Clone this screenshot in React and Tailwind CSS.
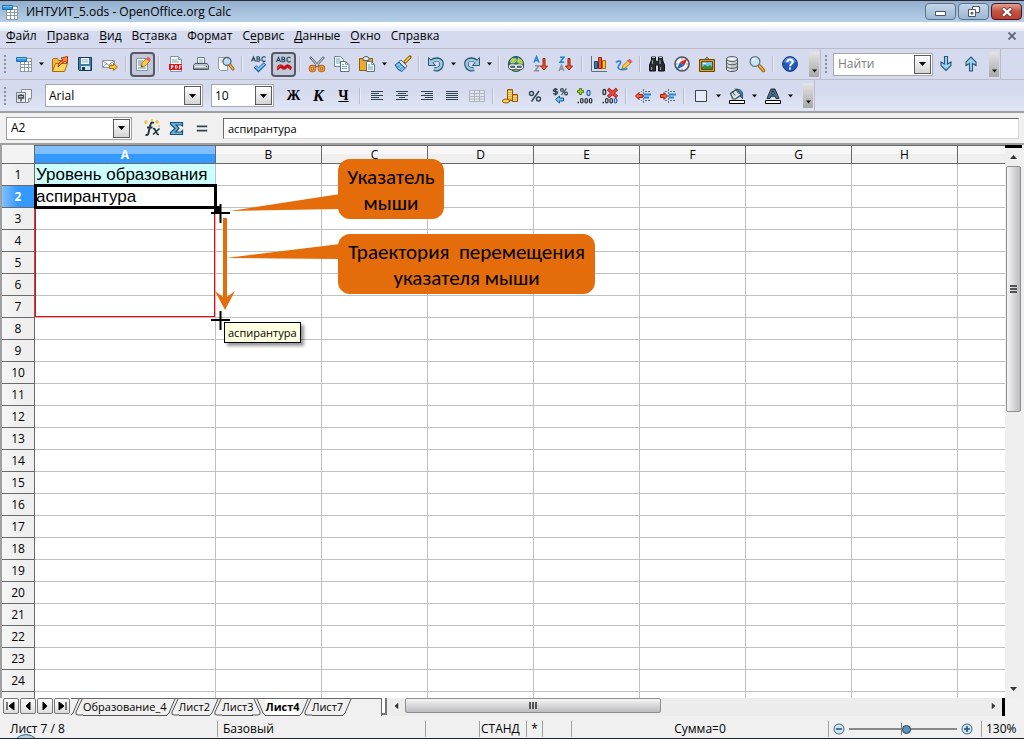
import { clsx } from "clsx";

const ICONS = {
  sheet: (
    <>
      <path d="M4 2h12v14H4z" fill="#fff" />
      <path d="M4 5.500h12M4 8.500h12M4 11.500h12M4.500 5v11M8.500 5v11M12.500 5v11M15.500 2v14M4 15.500h12M11 2.500h5" stroke="#8b98a5" fill="none" />
      <path d="M.5 1.500h10v4H.5z" fill="#2f9be6" stroke="#1c6fae" />
      <path d="M1 2.500h9" stroke="#7cc8f8" />
    </>
  ),
  open: (
    <>
      <path d="M.5 15V3.500l1-1h4l1 2h3V8" fill="#f3b93c" stroke="#a86b05" />
      <path d="M.5 15.500l3-8h12l-3 8z" fill="#ffd75e" stroke="#a86b05" />
      <path d="M6 11c0-4 2-6 5-6.500L9 2l6.500-1.500V7L13 5.500C10 7 9 8 6 11z" fill="#f58a3c" stroke="#a8280a" strokeWidth=".9" />
    </>
  ),
  save: (
    <>
      <path d="M1.500 1.500h13v13h-12l-1-1z" fill="#3d7ea8" stroke="#173a52" />
      <path d="M4 2h8v6H4z" fill="#eef6fb" />
      <path d="M5 4h6M5 6h6" stroke="#9db6c6" />
      <path d="M4 10h9v4H4z" fill="#d5dfe6" />
      <path d="M5 11h3v3H5z" fill="#173a52" />
    </>
  ),
  mail: (
    <>
      <path d="M.5 4.500h12v7H.5z" fill="#fff" stroke="#8a949e" />
      <path d="M1 5l5.500 4L12 5M1 11l4-3.500M12 11L8 7.500" fill="none" stroke="#8a949e" />
      <path d="M7.500 9.500h4v-2l4 3.500-4 3.500v-2h-4z" fill="#ffc83d" stroke="#a86b05" />
    </>
  ),
  edit: (
    <>
      <path d="M1.500 2.500h11v12h-11z" fill="#fff" stroke="#7d98ad" />
      <path d="M3 5h5M3 7h4M3 9h3M3 12h8" stroke="#5d7f99" />
      <path d="M6 11l1-4 5-5 3 3-5 5z" fill="#ffc83d" stroke="#8a6a10" strokeWidth=".7" />
      <path d="M11 3l2-2.500L16 3.500 14 6z" fill="#ef5b6a" />
      <path d="M6 11l.6-2 1.400 1.400z" fill="#222" />
    </>
  ),
  pdf: (
    <>
      <path d="M2.500.5h8l3 3v12h-11z" fill="#f2f6f9" stroke="#8395a3" />
      <path d="M10.500.5v3h3" fill="#c4d2dc" stroke="#8395a3" />
      <path d="M4 4h5M4 6h7" stroke="#8fa3b2" />
      <path d="M1 8h13v6H1z" fill="#e0161c" />
      <path d="M3.500 13V9.500h1.500v1.500H3.500M7.500 9.500v3h1l.6-.6V10l-.6-.5zM11.500 13V9.500h2M11.500 11.200h1.500" stroke="#fff" fill="none" strokeWidth=".9" />
    </>
  ),
  print: (
    <>
      <path d="M4.500 8V1.500h7V8" fill="#fff" stroke="#6c7c88" />
      <path d="M6 4h4M6 6h4" stroke="#7da4c1" />
      <path d="M2 7.500h12l1.500 2v4H.5v-4z" fill="#b9c4cc" stroke="#4c5961" />
      <path d="M1 12.500h14v1.500H1z" fill="#4c5961" />
      <path d="M2 10.500h10" stroke="#e9eef1" />
      <path d="M13 10h1v1h-1z" fill="#3b8a2c" />
    </>
  ),
  preview: (
    <>
      <path d="M.5 1.500h9v13h-7l-2-2z" fill="#fff" stroke="#8d9aa4" />
      <path d="M2 4h4M2 6h2" stroke="#b6c2cb" />
      <circle cx="9" cy="5.500" r="4" fill="#b9dcf4" stroke="#4e6576" strokeWidth="1.300" />
      <path d="M7 4.500a2.500 2.500 0 0 1 2-1.500" stroke="#fff" fill="none" />
      <path d="M12 9l3 4" stroke="#8c5a0a" strokeWidth="3" strokeLinecap="round" />
      <path d="M12 9l3 4" stroke="#f6b53a" strokeWidth="1.500" strokeLinecap="round" />
    </>
  ),
  spell: (
    <>
      <path d="M.5 5.500L2.500.8l2 4.700M1.200 4h2.600M6 .8v4.400h2l.9-.8v-.8L8 3H6h1.800l.8-.7v-.8l-.8-.7zM14.500 1.500l-1-.7h-1.200l-1.300 1v2.600l1.300 1h1.200l1-.7" fill="none" stroke="#244a60" strokeWidth="1.100" />
      <path d="M4 10.500l3.500 3.500L14 7.500" fill="none" stroke="#1d5f9c" strokeWidth="3.600" />
      <path d="M4.500 10.700l3 2.800 6-5.700" fill="none" stroke="#7cc8f8" strokeWidth="1.800" />
    </>
  ),
  autospell: (
    <>
      <path d="M.5 6l2-4.700 2 4.700M1.200 4.500h2.600M6 1.300v4.400h2l.9-.8v-.8L8 3.500H6h1.800l.8-.7V2L8 1.300zM14.500 2l-1-.7h-1.200l-1.300 1v2.600l1.300 1h1.200l1-.7" fill="none" stroke="#244a60" strokeWidth="1.100" />
      <path d="M1 12.500c1.500 0 2-2.500 3.500-2.500s2 2 3.500 2 2-2 3.500-2 2 2 4 2.500" fill="none" stroke="#c0141a" strokeWidth="3.400" />
      <path d="M1.500 12c1.500 0 1.500-2.500 3-2.500" fill="none" stroke="#f35a5a" />
    </>
  ),
  cut: (
    <>
      <path d="M1 1l9 10M15 1L6 11" stroke="#53616c" strokeWidth="2.400" />
      <path d="M1.500 1.500l8 9M14.500 1.500l-8 9" stroke="#dfe7ec" />
      <circle cx="3.500" cy="12.500" r="2.300" fill="none" stroke="#a3470a" strokeWidth="2.800" />
      <circle cx="12.500" cy="12.500" r="2.300" fill="none" stroke="#a3470a" strokeWidth="2.800" />
      <circle cx="3.500" cy="12.500" r="2.300" fill="none" stroke="#f59a2c" strokeWidth="1.600" />
      <circle cx="12.500" cy="12.500" r="2.300" fill="none" stroke="#f59a2c" strokeWidth="1.600" />
    </>
  ),
  copy: (
    <>
      <path d="M.5.5h6l3 3v7h-9z" fill="#eef5fa" stroke="#6d8a9e" />
      <path d="M2 3h4M2 5h5M2 7h5" stroke="#7fa5be" />
      <path d="M6.500 5.500h5l3.500 3v7H6.500z" fill="#fff" stroke="#54758b" />
      <path d="M11.500 5.500v3H15M8 8.500h2M8 10.500h5M8 12.500h5" fill="none" stroke="#7fa5be" />
    </>
  ),
  paste: (
    <>
      <path d="M.5 2.500h13v12H.5z" fill="#eda92b" stroke="#8d5c05" />
      <path d="M4 4.500V2l2-1.500h2L10 2v2.500z" fill="#e3e6e8" stroke="#555f66" />
      <path d="M7.500 5.500h5l3 3v7h-8z" fill="#fff" stroke="#54758b" />
      <path d="M12.500 5.500v3h3M9 9h2M9 11h5M9 13h5" fill="none" stroke="#6c97b4" />
    </>
  ),
  brush: (
    <>
      <path d="M10 6l5-5" stroke="#8d5c05" strokeWidth="3.200" strokeLinecap="round" />
      <path d="M10 6l5-5" stroke="#ffc83d" strokeWidth="1.700" />
      <path d="M6 4l6 6-2 2.500L3.500 6z" fill="#dfe6ea" stroke="#5e6c76" />
      <path d="M4 6l6 6-3 3.500-4-2L0 9z" fill="#59a8e6" stroke="#1d5f9c" />
      <path d="M5 8l-3 1.500M6.500 10L4 13M8.500 12L6.500 14.500" stroke="#c0e2fa" />
    </>
  ),
  undo: (
    <>
      <path d="M3 5.500C10 1 14.500 4.500 13.500 9c-.7 3.500-4 5-7.500 4" fill="none" stroke="#2b5873" strokeWidth="4.400" />
      <path d="M.5 1.500v8h7z" fill="#9fcbe3" stroke="#2b5873" />
      <path d="M3 6C10 1.500 14.300 5 13.300 9c-.7 3-4 4.600-7 4" fill="none" stroke="#9fcbe3" strokeWidth="2.400" />
    </>
  ),
  redo: (
    <>
      <path d="M13 5.500C6 1 1.500 4.500 2.500 9c.7 3.500 4 5 7.500 4" fill="none" stroke="#2b5873" strokeWidth="4.400" />
      <path d="M15.500 1.500v8h-7z" fill="#9fcbe3" stroke="#2b5873" />
      <path d="M13 6C6 1.500 1.700 5 2.700 9c.7 3 4 4.600 7 4" fill="none" stroke="#9fcbe3" strokeWidth="2.400" />
    </>
  ),
  link: (
    <>
      <circle cx="8" cy="8" r="7.500" fill="#2b7aa8" stroke="#1b4557" />
      <path d="M2 5l2-3 4 .5 1 2-3 3H3zM10 1.500l4 2.500 1 4-3 1-3-3z" fill="#b6d24a" />
      <path d="M3 13l5 2.500 5-2.500z" fill="#8fb83a" />
      <rect x="1.500" y="9" width="6.500" height="3.500" rx="1.700" fill="none" stroke="#30383d" strokeWidth="2.600" />
      <rect x="8" y="9" width="6.500" height="3.500" rx="1.700" fill="none" stroke="#30383d" strokeWidth="2.600" />
      <rect x="1.500" y="9" width="6.500" height="3.500" rx="1.700" fill="none" stroke="#eef2f4" strokeWidth="1.300" />
      <rect x="8" y="9" width="6.500" height="3.500" rx="1.700" fill="none" stroke="#eef2f4" strokeWidth="1.300" />
    </>
  ),
  sortAz: (
    <>
      <path d="M1 6.500L3.500.8 6 6.500M1.800 4.500h3.400" fill="none" stroke="#1f86d8" strokeWidth="1.600" />
      <path d="M2 9.700h4L2 14.800h4.200" fill="none" stroke="#8a8f94" strokeWidth="1.500" />
      <path d="M10 2.500h2v7.500h2.500l-3.500 4L7.500 10H10z" fill="#f0603a" stroke="#9d1c05" />
    </>
  ),
  sortZa: (
    <>
      <path d="M2 1.200h4L2 6.300h4.200" fill="none" stroke="#1f86d8" strokeWidth="1.500" />
      <path d="M1 15l2.500-5.700L6 15M1.800 13h3.400" fill="none" stroke="#8a8f94" strokeWidth="1.500" />
      <path d="M10 2.500h2v7.500h2.500l-3.500 4L7.500 10H10z" fill="#f0603a" stroke="#9d1c05" />
    </>
  ),
  chart: (
    <>
      <path d="M.5 0v15.500H16" fill="none" stroke="#5b6f7d" />
      <path d="M3.500 5.500h3v7h-3z" fill="#2f7fb4" stroke="#174763" />
      <path d="M7.500 1.500h3v11h-3z" fill="#f1592e" stroke="#9d1c05" />
      <path d="M11.500 4.500h3v8h-3z" fill="#ffc02e" stroke="#a86b05" />
    </>
  ),
  draw: (
    <>
      <path d="M0 6.500c4-3 6-1 3.500 2-2 2.500-2 4.500 1 5 3 .4 5 0 7-1" fill="none" stroke="#2f86d0" strokeWidth="1.700" />
      <path d="M6 13l1-3.500 5-5 2.500 2.500-5 5z" fill="#ffc83d" stroke="#8a6a10" strokeWidth=".8" />
      <path d="M12 4.500l1.500-1.500L16 5.500 14.500 7z" fill="#ef5b6a" stroke="#a83240" strokeWidth=".5" />
    </>
  ),
  find: (
    <>
      <path d="M2.500 1h4v3l1 2h1l1-2V1h4v3l2 5v6H9.500V9h-3v6H.5V9l2-5z" fill="#2a2e31" stroke="#111" />
      <path d="M3.500 4v4M11 4v4M2.500 11v3M11.500 11v3" stroke="#8b959b" strokeWidth="1.200" />
      <path d="M3 1.500h3M10 1.500h3" stroke="#b7c0c5" />
    </>
  ),
  compass: (
    <>
      <circle cx="8" cy="8" r="7" fill="#f4f6f7" stroke="#4b565d" strokeWidth="1.600" />
      <path d="M8 2v1.500M8 12.500V14M2 8h1.500M12.500 8H14" stroke="#68747b" />
      <path d="M13.500 2.500L10 10 6 6z" fill="#e32321" />
      <path d="M2.500 13.500L6 6l4 4z" fill="#1c62c8" />
    </>
  ),
  gallery: (
    <>
      <path d="M6 3.500L8 1l2 2.500" fill="none" stroke="#5b4a20" />
      <path d="M.5 3.500h15v12H.5z" fill="#d9a13a" stroke="#6e4607" />
      <path d="M2.500 5.500h11v8h-11z" fill="#78c0f0" stroke="#6e4607" />
      <path d="M3 13v-2l3-2 3 1.500L11 9l2 2v2z" fill="#2f8a3a" />
      <path d="M4 7.500h3" stroke="#fff" />
    </>
  ),
  database: (
    <>
      <path d="M2.500 3v10c0 1.500 2.500 2.500 5.500 2.500s5.500-1 5.500-2.500V3z" fill="#c5cacd" stroke="#51595e" />
      <path d="M4 5v9M6 6v9" stroke="#f3f5f6" />
      <path d="M2.500 6.500c0 1.300 2.500 2.300 5.500 2.300s5.500-1 5.500-2.300M2.500 10c0 1.300 2.500 2.300 5.500 2.300s5.500-1 5.500-2.300" fill="none" stroke="#51595e" />
      <ellipse cx="8" cy="3" rx="5.500" ry="2.400" fill="#eceff0" stroke="#51595e" />
    </>
  ),
  zoom: (
    <>
      <path d="M10.500 10l4 4.500" stroke="#8c5a0a" strokeWidth="3.400" strokeLinecap="round" />
      <path d="M10.500 10l4 4.500" stroke="#f6b53a" strokeWidth="1.800" strokeLinecap="round" />
      <circle cx="6" cy="5.500" r="4.900" fill="#c7e5f8" stroke="#60788a" strokeWidth="1.300" />
      <path d="M3.500 5A2.800 2.800 0 0 1 6 2.700" fill="none" stroke="#fff" strokeWidth="1.300" />
    </>
  ),
  help: (
    <>
      <circle cx="8" cy="8" r="7.400" fill="#2457b8" stroke="#123a86" />
      <path d="M2 6a6.300 6.300 0 0 1 12 0c-4 2-8 2-12 0z" fill="#5c8be0" />
      <path d="M5.300 6c0-3.400 5.400-3.300 5.400 0 0 1.900-2.600 2-2.600 4.200M8 11.600v1.900" fill="none" stroke="#fff" strokeWidth="2" />
    </>
  ),
  down: <path d="M6.500.5h3v7.500l3.500-2v3.500l-5 5-5-5V6l3.500 2z" fill="#9fd0ee" stroke="#245a7c" strokeWidth="1.100" />,
  up: <path d="M6.500 15h3V7.500l3.500 2V6L8 1 3 6v3.500l3.500-2z" fill="#9fd0ee" stroke="#245a7c" strokeWidth="1.100" />,
  styles: (
    <>
      <path d="M5.500 1.500h10v9l-3 4h-7z" fill="#eff1f3" stroke="#858e96" />
      <path d="M12.500 14v-3.500h3" fill="#d3d7da" stroke="#858e96" />
      <path d="M.5 4.500h9v10h-9z" fill="#e4e7ea" stroke="#777f86" />
      <path d="M2.500 10V7.500h5V10zM5 6v1.500M5 10v3.500" fill="none" stroke="#3d4a54" strokeWidth="1.300" />
    </>
  ),
  alignLeft: <path d="M2 3.500h12M2 5.500h8M2 7.500h12M2 9.500h8M2 11.500h12" stroke="#2f4350" />,
  alignCenter: <path d="M2 3.500h12M4 5.500h8M2 7.500h12M5 9.500h6M2 11.500h12" stroke="#2f4350" />,
  alignRight: <path d="M2 3.500h12M6 5.500h8M2 7.500h12M6 9.500h8M2 11.500h12" stroke="#2f4350" />,
  justify: <path d="M2 3.500h12M2 5.500h12M2 7.500h12M2 9.500h12M2 11.500h12" stroke="#2f4350" />,
  merge: <path d="M.5 2.500h15v11H.5zM0 5.500h16M0 8.500h16M0 11h16M5.500 2v12M10.500 2v12" fill="#e3e6f0" stroke="#b0b4c0" />,
  currency: (
    <>
      <path d="M5.500 1.500h5v11h-5z" fill="#f0a830" stroke="#8f5406" />
      <path d="M6 3.500h4M6 5.500h4M6 7.500h4M6 9.500h4" stroke="#ffe08a" />
      <path d="M10.500 6.500h5v7h-5z" fill="#f0a830" stroke="#8f5406" />
      <path d="M11 8.500h4M11 10.500h4M11 12.500h4" stroke="#ffe08a" />
      <ellipse cx="4" cy="13" rx="3.500" ry="2" fill="#ffd05a" stroke="#8f5406" />
    </>
  ),
  percent: (
    <>
      <circle cx="4.500" cy="5.500" r="2" fill="none" stroke="#33474f" strokeWidth="1.400" />
      <circle cx="11.500" cy="11" r="2" fill="none" stroke="#33474f" strokeWidth="1.400" />
      <path d="M12 3L4.500 13.500" stroke="#33474f" strokeWidth="1.500" />
    </>
  ),
  standard: (
    <>
      <path d="M5.500 2l-1-.8H2.500l-1 1V3l4 1v1.200l-1 1H2.500L1.200 5.400M3.500 0v7.500" fill="none" stroke="#33474f" strokeWidth="1.300" />
      <circle cx="10" cy="2" r="1.400" fill="none" stroke="#33474f" strokeWidth="1.200" />
      <circle cx="14" cy="5.500" r="1.400" fill="none" stroke="#33474f" strokeWidth="1.200" />
      <path d="M14.500.5l-5 6.500" stroke="#33474f" strokeWidth="1.200" />
      <path d="M3.500 11.500l4-3.500v2h4v3h-4v2z" fill="#79bff0" stroke="#155c92" />
    </>
  ),
  addDecimal: (
    <>
      <path d="M2.500.5h2v2h2v2h-2v2h-2v-2h-2v-2h2z" fill="#a6d82e" stroke="#4b7a0a" />
      <rect x="10" y="2.500" width="3" height="5" rx="1.400" fill="none" stroke="#2b62c8" strokeWidth="1.300" />
      <path d="M.5 14.500H2" stroke="#222" strokeWidth="1.600" />
      <g fill="none" stroke="#273238" strokeWidth="1.200">
        <rect x="3.600" y="10.500" width="2.400" height="4.400" rx="1.200" />
        <rect x="8" y="10.500" width="2.400" height="4.400" rx="1.200" />
        <rect x="12.400" y="10.500" width="2.400" height="4.400" rx="1.200" />
      </g>
    </>
  ),
  dropDecimal: (
    <>
      <rect x="1" y="1.500" width="2.600" height="5" rx="1.300" fill="none" stroke="#273238" strokeWidth="1.300" />
      <path d="M.5 14.500H2" stroke="#222" strokeWidth="1.600" />
      <rect x="3.600" y="10.500" width="2.400" height="4.400" rx="1.200" fill="none" stroke="#273238" strokeWidth="1.200" />
      <rect x="8" y="10.500" width="2.400" height="4.400" rx="1.200" fill="none" stroke="#273238" strokeWidth="1.200" />
      <rect x="12.400" y="10.500" width="2.400" height="4.400" rx="1.200" fill="none" stroke="#2b62c8" strokeWidth="1.200" />
      <path d="M6 1l9 8M15 1L6 9" stroke="#8f0d0d" strokeWidth="3.200" />
      <path d="M6.500 1.500l8 7M14.500 1.500l-8 7" stroke="#f04a3c" strokeWidth="1.800" />
    </>
  ),
  outdent: (
    <>
      <path d="M6 3.500h1M8.500 1v14M10 3.500h6M10 12.500h6M6 12.500h1" stroke="#5a6b76" strokeDasharray="2 1" />
      <path d="M9 6.500h7M9 9.500h5" stroke="#1f86d8" strokeWidth="2" />
      <path d="M.5 8L4 4.500v2h3.500v3H4v2z" fill="#f0603a" stroke="#9d1c05" />
    </>
  ),
  indent: (
    <>
      <path d="M5 3.500h2M8.500 1v14M10 3.500h6M10 12.500h6M5 12.500h2" stroke="#5a6b76" strokeDasharray="2 1" />
      <path d="M9 6.500h7M9 9.500h5" stroke="#1f86d8" strokeWidth="2" />
      <path d="M7.500 8L4 4.500v2H.5v3H4v2z" fill="#f0603a" stroke="#9d1c05" />
    </>
  ),
  borders: <path d="M2.500 2.500h11v11h-11z" fill="#e8ecf8" stroke="#39454d" />,
  fill: (
    <>
      <path d="M9 1.500c4 0 5 3 4.500 9l-3-3z" fill="#3a8ec8" stroke="#1c557e" />
      <path d="M1.500 5.500L8 1l4 6-5.500 4H4z" fill="#d9e2e8" stroke="#34464f" strokeWidth="1.200" />
      <path d="M3 3l3 4.500M6 .5l3.500 5" stroke="#34464f" />
      <path d="M.5 12.500h15v3H.5z" fill="#fff" stroke="#000" />
    </>
  ),
  fontColor: (
    <>
      <path d="M2 10.500L6 1h4l4 9.500h-3l-.8-2.300H5.800L5 10.500zM6.500 6h3L8 2.500z" fill="#4f7890" stroke="#18303f" />
      <path d="M.5 12.500h15v3H.5z" fill="#fff" stroke="#000" />
    </>
  ),
  fx: (
    <>
      <path d="M10 3C7 1.500 6.500 4 6 6.500L4.500 13c-.5 2-1.500 2.500-3 1.500M3 7.500h5.500" fill="none" stroke="#22363f" strokeWidth="1.900" />
      <path d="M9 8.500l1.500.3 3 5.500 1.500.2M15.500 8.500L9 14.500" fill="none" stroke="#22363f" strokeWidth="1.700" />
      <path d="M2 0v4M0 2h4M8-1v3M13 0v4M11 2h4M15 5v2" stroke="#f0bb18" strokeWidth="1.200" />
    </>
  ),
  sum: <path d="M1.500 2.500h12v3.500l-1.500-1H7l3 3.200L6.500 12H12l1.500-1.500v4h-12v-2L6 8.500 1.500 4z" fill="#6db4e4" stroke="#164f78" strokeWidth="1.200" />,
  equals: <path d="M2 6h12M2 11h12" stroke="#33474f" strokeWidth="2" />,
};

function Icon({ name }) {
  return (
    <svg viewBox="0 0 16 16" className="size-4 overflow-visible" aria-hidden="true">
      {ICONS[name]}
    </svg>
  );
}

const STANDARD_TOOLS = [
  ["sheet", "Создать"], "arrow", ["open", "Открыть"], ["save", "Сохранить"], ["mail", "Отправить"], "sep",
  ["edit", "Правка файла", true], "sep",
  ["pdf", "Экспорт в PDF"], ["print", "Печать"], ["preview", "Просмотр"], "sep",
  ["spell", "Орфография"], ["autospell", "Автопроверка", true], "sep",
  ["cut", "Вырезать"], ["copy", "Копировать"], ["paste", "Вставить"], "arrow", ["brush", "Формат по образцу"], "sep",
  ["undo", "Отменить"], "arrow", ["redo", "Повторить"], "arrow", "sep",
  ["link", "Гиперссылка"], ["sortAz", "По возрастанию"], ["sortZa", "По убыванию"], "sep",
  ["chart", "Диаграмма"], ["draw", "Рисование"], "sep",
  ["find", "Найти и заменить"], ["compass", "Навигатор"], ["gallery", "Галерея"], ["database", "Источники данных"], ["zoom", "Масштаб"], "sep",
  ["help", "Справка"],
];

const FORMAT_TOOLS = [
  "sep", ["alignLeft", "По левому краю"], ["alignCenter", "По центру"], ["alignRight", "По правому краю"], ["justify", "По ширине"], ["merge", "Объединить ячейки"], "sep",
  ["currency", "Денежный"], ["percent", "Процентный"], ["standard", "Стандартный"], ["addDecimal", "Добавить разряд"], ["dropDecimal", "Удалить разряд"], "sep",
  ["outdent", "Уменьшить отступ"], ["indent", "Увеличить отступ"], "sep",
  ["borders", "Обрамление"], "arrow", ["fill", "Цвет фона"], "arrow", ["fontColor", "Цвет шрифта"], "arrow",
];

const MENU = [
  ["", "Ф", "айл"],
  ["", "П", "равка"],
  ["", "В", "ид"],
  ["Вс", "т", "авка"],
  ["Фо", "р", "мат"],
  ["С", "е", "рвис"],
  ["", "Д", "анные"],
  ["", "О", "кно"],
  ["Спр", "а", "вка"],
];

const COLUMNS = ["A", "B", "C", "D", "E", "F", "G", "H", ""];
const ROWS = Array.from({ length: 25 }, (_, i) => i + 1);
const LAST_FULL_ROW = 24;
const CELLS = { A1: "Уровень образования", A2: "аспирантура" };

function Triangle({ className }) {
  return (
    <svg viewBox="0 0 7 4" className={clsx("h-1", className || "w-[7px]")} aria-hidden="true">
      <path d="M0 0h7L3.500 4z" fill="currentColor" />
    </svg>
  );
}

function ToolButton({ label, pressed, children }) {
  return (
    <button
      type="button"
      aria-label={label}
      className={clsx(
        "flex h-[25px] w-[25px] shrink-0 items-center justify-center",
        pressed && "rounded-sm border-2 border-[#555a66] bg-[#c3c8d8]"
      )}
    >
      {children}
    </button>
  );
}

function Tools({ items }) {
  return items.map((item, i) => {
    if (item === "sep") {
      return <span key={i} className="mx-[3px] h-4 w-0.5 shrink-0 border-l border-[#b9bccb] bg-[#e9ebf5]" />;
    }
    if (item === "arrow") {
      return (
        <button key={i} type="button" aria-label="Ещё" className="flex w-[11px] shrink-0 justify-center">
          <Triangle className="w-[5px]" />
        </button>
      );
    }
    return (
      <ToolButton key={i} label={item[1]} pressed={item[2]}>
        <Icon name={item[0]} />
      </ToolButton>
    );
  });
}

function Grip() {
  return <span className="mx-1 h-[18px] w-[3px] shrink-0 border-l-2 border-dotted border-[#8a90a4]" />;
}

function Overflow() {
  return (
    <button type="button" aria-label="Другие кнопки" className="flex h-[25px] w-2.5 shrink-0 items-end justify-center bg-linear-to-b from-[#e4e4e4] to-[#a8a8a8] pb-1">
      <Triangle className="w-[5px]" />
    </button>
  );
}

function ArrowBox() {
  return (
    <span className="flex h-full w-[17px] shrink-0 items-center justify-center border border-[#5c5c5c] bg-linear-to-b from-white to-[#d4d4d4]">
      <Triangle />
    </span>
  );
}

function Combo({ label, value, className }) {
  return (
    <div className={clsx("relative h-[23px] shrink-0 border border-[#a6a8b0] bg-white", className)}>
      <select aria-label={label} defaultValue={value} className="h-full w-full appearance-none bg-transparent pl-[3px] text-[12px] outline-none">
        <option>{value}</option>
      </select>
      <span className="pointer-events-none absolute inset-y-px right-px">
        <ArrowBox />
      </span>
    </div>
  );
}

function TitleBar() {
  const frame = "flex h-[17px] w-[31px] items-center justify-center rounded-sm border border-[#5d7189]";
  return (
    <header className="flex h-[22px] shrink-0 items-center border-t border-[#2c2c34] bg-linear-to-b from-[#93afcd] to-[#b6cfe8] px-0.5">
      <Icon name="sheet" />
      <h1 className="ml-2 flex-1 text-[12px]">ИНТУИТ_5.ods - OpenOffice.org Calc</h1>
      <div className="flex gap-0.5">
        <button type="button" aria-label="Свернуть" className={clsx(frame, "bg-linear-to-b from-[#c5d6e9] to-[#9cb7d3]")}>
          <svg viewBox="0 0 11 5" className="mt-1 h-[5px] w-[11px]"><path d="M.5.5h10v4H.5z" fill="#fff" stroke="#4b5866" /></svg>
        </button>
        <button type="button" aria-label="Восстановить" className={clsx(frame, "bg-linear-to-b from-[#c5d6e9] to-[#9cb7d3]")}>
          <svg viewBox="0 0 12 11" className="h-[11px] w-3">
            <path d="M4.500.5h7v6h-7z" fill="#fff" stroke="#4b5866" />
            <path d="M.5 3.500h7v7h-7z" fill="#fff" stroke="#4b5866" />
            <path d="M3 6.500h2v1.500H3z" fill="#9cb7d3" stroke="#4b5866" />
          </svg>
        </button>
        <button type="button" aria-label="Закрыть" className="flex h-[17px] w-[31px] items-center justify-center rounded-sm border border-[#4a1420] bg-linear-to-b from-[#e0a093] via-[#c4513f] to-[#b8402c]">
          <svg viewBox="0 0 12 10" className="h-2.5 w-3">
            <path d="M1.500 1l9 8M10.500 1l-9 8" stroke="#6b3030" strokeWidth="4" />
            <path d="M2 1.400l8 7.200M10 1.400L2 8.600" stroke="#fff" strokeWidth="2.400" />
          </svg>
        </button>
      </div>
    </header>
  );
}

function MenuBar() {
  return (
    <nav className="flex h-[27px] shrink-0 items-center border-b border-[#bcbcc4] bg-linear-to-b from-white from-10% via-[#e6ebf7] via-33% to-[#d5daee] to-34% pl-1.5 pr-2 pt-0.5">
      <div className="flex flex-1 gap-2.5">
        {MENU.map(([before, key, after]) => (
          <button key={before + key + after} type="button">
            {before}
            <u className="underline-offset-2">{key}</u>
            {after}
          </button>
        ))}
      </div>
      <button type="button" aria-label="Закрыть документ">
        <svg viewBox="0 0 8 8" className="size-2"><path d="M.5.5l7 7M7.500.5l-7 7" stroke="#5b6573" strokeWidth="1.800" /></svg>
      </button>
    </nav>
  );
}

function StandardToolbar() {
  return (
    <div className="flex h-[31px] shrink-0 border-b border-[#bcbcc4]">
      <div className="flex items-center border-r border-[#bcbcc4] pr-px">
        <Grip />
        <Tools items={STANDARD_TOOLS} />
        <span className="w-[7px]" />
        <Overflow />
      </div>
      <div className="flex items-center border-r border-[#bcbcc4] pr-px">
        <Grip />
        <div className="ml-px flex h-[23px] w-[100px] border border-[#a6a8b0] bg-white p-px">
          <input aria-label="Найти" placeholder="Найти" className="w-0 flex-1 pl-[3px] outline-none placeholder:text-[#7d7d7d]" />
          <button type="button" aria-label="Список поиска"><ArrowBox /></button>
        </div>
        <ToolButton label="Найти далее"><Icon name="down" /></ToolButton>
        <ToolButton label="Найти ранее"><Icon name="up" /></ToolButton>
        <span className="w-1.5" />
        <Overflow />
      </div>
    </div>
  );
}

function FormatToolbar() {
  return (
    <div className="flex h-[31px] shrink-0">
      <div className="flex items-center border-r border-[#bcbcc4] pr-px">
        <Grip />
        <ToolButton label="Стили"><Icon name="styles" /></ToolButton>
        <Combo label="Шрифт" value="Arial" className="ml-[9px] w-[158px]" />
        <Combo label="Размер" value="10" className="ml-2 mr-[7px] w-[63px]" />
        <ToolButton label="Полужирный"><span className="font-['Liberation_Serif',serif] text-[14px] font-bold">Ж</span></ToolButton>
        <ToolButton label="Курсив"><span className="font-['Liberation_Serif',serif] text-[16px] font-bold italic">К</span></ToolButton>
        <ToolButton label="Подчёркнутый"><span className="font-['Liberation_Serif',serif] text-[14px] font-bold underline">Ч</span></ToolButton>
        <Tools items={FORMAT_TOOLS} />
        <span className="w-[7px]" />
        <Overflow />
      </div>
    </div>
  );
}

function FormulaBar() {
  return (
    <div className="flex h-[34px] shrink-0 items-center border-y-2 border-[#a0a0a0] bg-[#f0f0f0] pl-1.5 pr-[5px]">
      <div className="flex h-[23px] w-[126px] border border-[#a0a0a0] bg-white p-px">
        <input aria-label="Имя ячейки" defaultValue="A2" className="w-0 flex-1 pl-[3px] outline-none" />
        <button type="button" aria-label="Список имён"><ArrowBox /></button>
      </div>
      <span className="w-[7px]" />
      <ToolButton label="Мастер функций"><Icon name="fx" /></ToolButton>
      <ToolButton label="Сумма"><Icon name="sum" /></ToolButton>
      <ToolButton label="Функция"><svg viewBox="0 0 16 16" className="size-3.5">{ICONS.equals}</svg></ToolButton>
      <input
        aria-label="Строка ввода"
        defaultValue="аспирантура"
        className="ml-[9px] h-[21px] flex-1 border border-[#d8d8d8] border-l-[#696969] border-t-[#696969] bg-white pl-1 text-[11px] outline-none"
      />
    </div>
  );
}

function Grid() {
  return (
    <table className="w-full table-fixed border-separate border-spacing-0">
      <colgroup>
        <col className="w-[33px]" />
        <col className="w-[181px]" />
        {COLUMNS.slice(1, 8).map((c) => (
          <col key={c} className="w-[106px]" />
        ))}
        <col />
      </colgroup>
      <thead>
        <tr className="h-[19px] leading-4">
          <td className="border-b border-r border-[#696969] bg-[#f3f3f3] p-0" />
          {COLUMNS.map((c, i) => (
            <th
              key={i}
              scope="col"
              className={clsx(
                "border-b border-t border-[#696969] p-0",
                i < 8 && "border-r",
                c === "A"
                  ? "bg-linear-to-b from-[#7fbfff] from-50% to-[#3399ff] to-50% font-bold text-white"
                  : "bg-linear-to-b from-[#f7f7f7] from-50% to-[#efefef] to-50% font-normal"
              )}
            >
              {c}
            </th>
          ))}
        </tr>
      </thead>
      <tbody>
        {ROWS.map((r) => (
          <tr key={r} className="h-[22px] leading-5">
            <th
              scope="row"
              className={clsx(
                "border-b border-r border-[#696969] p-0",
                r === 2
                  ? "bg-linear-to-r from-[#7fbfff] to-[#3399ff] to-50% font-bold text-white"
                  : "bg-linear-to-r from-[#f7f7f7] to-[#efefef] to-50% font-normal"
              )}
            >
              {r <= LAST_FULL_ROW && r}
            </th>
            {COLUMNS.map((c, i) => (
              <td
                key={i}
                className={clsx(
                  "whitespace-nowrap border-b border-[#c0c0c0] py-0 pl-px pr-0 font-['Liberation_Sans',Arial,sans-serif] text-[17px]",
                  i < 8 && "border-r",
                  c + r === "A1" && "bg-[#ccffff]"
                )}
              >
                {CELLS[c + r]}
              </td>
            ))}
          </tr>
        ))}
      </tbody>
    </table>
  );
}

function Callout({ className, children }) {
  return (
    <p className={clsx("absolute flex h-[60px] items-center justify-center whitespace-pre rounded-xl bg-[#e46c0a] pt-0.5 text-center font-[Carlito,'Noto_Sans',sans-serif] text-[21px] leading-[26px]", className)}>
      {children}
    </p>
  );
}

/* Drag hint over the sheet: selection frame, fill range, pointer and its path. */
function Annotations() {
  return (
    <>
      <div className="absolute left-[33px] top-[61px] h-[111px] w-[180px] border border-t-0 border-[#ff0000]" />
      <div className="absolute left-8 top-[39px] h-[25px] w-[183px] border-[3px] border-black" />
      <svg viewBox="0 0 420 210" className="absolute left-0 top-0 h-[210px] w-[420px]" aria-hidden="true">
        <path d="M212 61h6v6h-6z" />
        <path d="M209 68h19M218.500 59v19M209 175h19M218.500 166v19" stroke="#000" strokeWidth="2" />
        <path d="M228 66L338 49v15zM224 113l114-14v15z" fill="#e46c0a" />
        <path d="M221 73h4v79l8-6-10 19-10-19 8 6z" fill="#e46c0a" />
      </svg>
      <Callout className="left-[336px] top-3.5 w-[106px]">{"Указатель\nмыши"}</Callout>
      <Callout className="left-[336px] top-[89px] w-[257px]">{"Траектория  перемещения\nуказателя мыши"}</Callout>
      <div className="absolute left-[222px] top-[177px] border border-black bg-[#ffffe1] px-[3px] text-[11px] leading-[19px] shadow-[3px_3px_3px_#00000066]">
        аспирантура
      </div>
    </>
  );
}

function VerticalScroll() {
  return (
    <div className="mr-0.5 flex w-[17px] shrink-0 flex-col items-center border-t-[3px] border-black bg-[#efefef]">
      <button type="button" aria-label="Вверх" className="flex h-[18px] items-center text-[#333]"><Triangle className="w-[7px] rotate-180" /></button>
      <div className="flex h-[246px] w-[15px] flex-col items-center justify-center gap-px rounded-xs border border-[#8e8e8e] bg-linear-to-r from-[#f5f5f5] to-[#bcbcc0]">
        <span className="h-0.5 w-[7px] bg-[#555]" />
        <span className="h-0.5 w-[7px] bg-[#555]" />
        <span className="h-0.5 w-[7px] bg-[#555]" />
      </div>
      <button type="button" aria-label="Вниз" className="mt-auto flex h-[18px] items-center text-[#333]"><Triangle /></button>
    </div>
  );
}

const NAV = [
  ["Первый лист", "M3 3v8M10 3L5 7l5 4z"],
  ["Предыдущий лист", "M9 3L5 7l4 4z"],
  ["Следующий лист", "M5 3l4 4-4 4z"],
  ["Последний лист", "M4 3l5 4-5 4zM11 3v8"],
];

function Slant({ flip, active, last }) {
  return (
    <svg viewBox="0 0 14 17" className={clsx("-mx-px h-[17px] w-3.5 shrink-0", flip && "-scale-x-100")} aria-hidden="true">
      {active && <path d="M12 0L6 13l1 3h7V0z" fill="#fff" />}
      <path d="M1 16L3 14 9 0" fill="none" stroke="#555" />
      {!last && <path d="M12 0L6 13q-1 3 2 3h6" fill="none" stroke="#555" />}
    </svg>
  );
}

function Tab({ active, children }) {
  return (
    <button type="button" role="tab" aria-selected={!!active} className={clsx("h-[17px] shrink-0 border-b border-[#555] text-[11px] leading-4", active ? "bg-white font-bold" : "bg-[#f0f0f0]")}>
      {children}
    </button>
  );
}

function SheetBar() {
  return (
    <div className="flex h-[18px] shrink-0 bg-[#f0f0f0] pl-[3px]">
      <div className="flex w-[379px] shrink-0 border-r border-[#696969]">
        <div className="mr-px flex gap-px">
          {NAV.map(([label, d]) => (
            <button key={label} type="button" aria-label={label} className="flex h-4 w-4 items-center justify-center rounded-xs border border-[#777] bg-linear-to-b from-white to-[#dcdcdc]">
              <svg viewBox="0 0 14 14" className="size-3.5 shrink-0"><path d={d} stroke="#000" /></svg>
            </button>
          ))}
        </div>
        <div role="tablist" className="flex flex-1 border-t border-[#696969]">
          <Slant />
          <Tab>Образование_4</Tab>
          <Slant />
          <Tab>Лист2</Tab>
          <Slant />
          <Tab>Лист3</Tab>
          <Slant flip />
          <Tab active>Лист4</Tab>
          <Slant />
          <Tab>Лист7</Tab>
          <Slant last />
        </div>
      </div>
      <span className="h-[17px] w-[5px] border-b-2 border-r-2 border-[#777] bg-white" />
      <div className="flex flex-1 items-start border-r-[3px] border-black bg-[#ececec]">
        <button type="button" aria-label="Влево" className="flex h-4 w-[18px] items-center justify-center text-[#333]"><Triangle className="w-[7px] rotate-90" /></button>
        <div className="flex h-[15px] w-64 items-center justify-center gap-px rounded-xs border border-[#8e8e8e] bg-linear-to-b from-[#f5f5f5] to-[#bcbcc0]">
          <span className="h-[7px] w-0.5 bg-[#555]" />
          <span className="h-[7px] w-0.5 bg-[#555]" />
          <span className="h-[7px] w-0.5 bg-[#555]" />
        </div>
        <button type="button" aria-label="Вправо" className="ml-auto flex h-4 w-[18px] items-center justify-center text-[#333]"><Triangle className="w-[7px] -rotate-90" /></button>
      </div>
      <span className="w-[19px]" />
    </div>
  );
}

function ZoomSign({ plus }) {
  return (
    <svg viewBox="0 0 12 12" className="size-3">
      <circle cx="6" cy="6" r="5" fill="#cfe6f7" stroke="#41698a" />
      <path d={plus ? "M3 6h6M6 3v6" : "M3 6h6"} stroke="#1d4f7a" strokeWidth="1.500" />
    </svg>
  );
}

function StatusBar() {
  const cell = "flex h-4 shrink-0 items-center border-r border-[#a0a0a0]";
  return (
    <footer className="relative flex h-[23px] shrink-0 items-center overflow-hidden border-b border-[#182430] bg-[#f0f0f0] pt-1 leading-4">
      <span className={clsx(cell, "w-[218px] pl-2.5")}>Лист 7 / 8</span>
      <span className={clsx(cell, "w-52 pl-[5px]")}>Базовый</span>
      <span className={clsx(cell, "w-[54px]")} />
      <span className={clsx(cell, "w-[47px] pl-px")}>СТАНД</span>
      <span className={clsx(cell, "w-4 justify-center")}>*</span>
      <span className={clsx(cell, "w-[29px]")} />
      <span className="flex h-4 flex-1 items-center justify-center border-r border-[#a0a0a0]">Сумма=0</span>
      <div className={clsx(cell, "w-[153px] gap-1 pl-1")}>
        <button type="button" aria-label="Уменьшить масштаб"><ZoomSign /></button>
        <div className="relative flex h-4 w-[108px] items-center">
          <span className="absolute left-[52px] top-0.5 h-3 w-px bg-[#777]" />
          <input
            type="range"
            aria-label="Масштаб"
            min="0"
            max="100"
            defaultValue="54"
            className="relative h-0.5 w-full appearance-none bg-[#8a8a8a] [&::-webkit-slider-thumb]:size-[9px] [&::-webkit-slider-thumb]:appearance-none [&::-webkit-slider-thumb]:rounded-full [&::-webkit-slider-thumb]:border [&::-webkit-slider-thumb]:border-[#24455c] [&::-webkit-slider-thumb]:bg-[#5f93b5]"
          />
        </div>
        <button type="button" aria-label="Увеличить масштаб"><ZoomSign plus /></button>
      </div>
      <span className="w-[42px] shrink-0 pl-1">130%</span>
      <span className="absolute left-3 top-[18px] size-7 rounded-full border border-[#38607e] bg-[#b9d3e6]" />
    </footer>
  );
}

export default function App() {
  return (
    <div className="flex h-screen flex-col bg-[#f0f0f0] font-['Open_Sans','Noto_Sans',sans-serif] text-[12px] text-black">
      <TitleBar />
      <MenuBar />
      <div className="shrink-0 bg-linear-to-b from-[#d5daee] from-70% to-[#e1e6f6]">
        <StandardToolbar />
        <FormatToolbar />
      </div>
      <FormulaBar />
      <main className="flex min-h-0 flex-1 border-l-2 border-[#a0a0a0]">
        <div className="relative min-w-0 flex-1 overflow-hidden bg-white">
          <Grid />
          <Annotations />
        </div>
        <VerticalScroll />
      </main>
      <SheetBar />
      <StatusBar />
    </div>
  );
}
